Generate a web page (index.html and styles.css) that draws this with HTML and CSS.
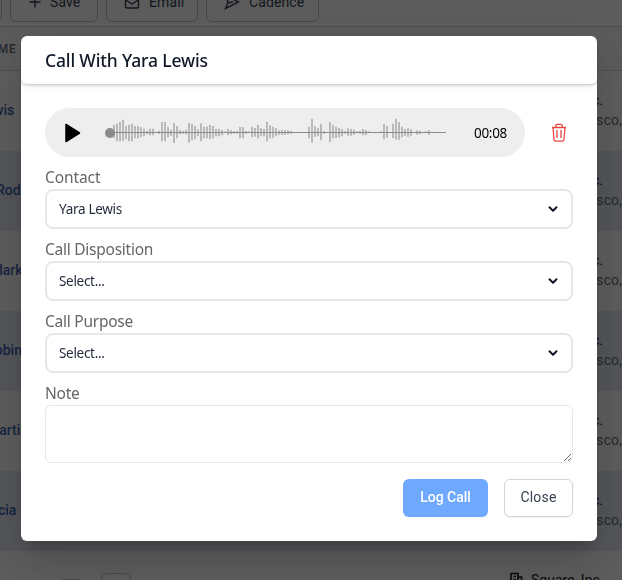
FILE: index.html
```html
<!DOCTYPE html>
<html lang="en">
<head>
<meta charset="utf-8">
<title>Call With Yara Lewis</title>
<link rel="stylesheet" href="styles.css">
</head>
<body>
<div class="page">
  <div class="toolbar">
    <div class="tool tool-cut"></div>
    <div class="tool tool-save"><svg width="14" height="14" viewBox="0 0 14 14"><path d="M7 1.5v11M1.5 7h11"/></svg>Save</div>
    <div class="tool tool-email"><svg width="16" height="16" viewBox="0 0 16 16"><rect x="1.5" y="2" width="13" height="12" rx="1.5"/><path d="M1.5 6L8 10l6.500-4"/></svg>Email</div>
    <div class="tool tool-cadence"><svg width="16" height="16" viewBox="0 0 16 16"><path d="M2.500 2L14.500 8 1.500 14.500 4 8.700zM4 8.700L9 8"/></svg>Cadence</div>
  </div>
  <div class="thead">NAME</div>
  <div class="row"><b class="n1">Lewis</b><div class="org"><span>Inc.</span><small>Francisco,</small></div></div>
  <div class="row alt"><b class="n2">Rodri</b><div class="org"><span>Inc.</span><small>Francisco,</small></div></div>
  <div class="row"><b class="n3">Clark</b><div class="org"><span>Inc.</span><small>Francisco,</small></div></div>
  <div class="row alt"><b class="n4">Robin</b><div class="org"><span>Inc.</span><small>Francisco,</small></div></div>
  <div class="row"><b class="n5">Martin</b><div class="org"><span>Inc.</span><small>Francisco,</small></div></div>
  <div class="row alt"><b class="n6">Garcia</b><div class="org"><span>Inc.</span><small>Francisco,</small></div></div>
  <div class="pager">
    <i class="page-mark"></i><i class="page-box"></i>
    <svg class="building" width="16" height="16" viewBox="0 0 16 16"><path d="M3 15V2.500h7V15M10 6h3.500v9M1.500 15h13M5.500 5.500h2.500M5.500 8.500h2.500"/></svg>
    <span>Square, Inc.</span>
  </div>
</div>
<div class="overlay">
  <div class="modal">
    <header class="modal-head"><span>Call With Yara Lewis</span></header>
    <div class="modal-body">
      <div class="audio-row">
        <div class="player">
          <svg class="play" width="18" height="22" viewBox="0 0 18 22"><path d="M2 2.500v17L15.500 11z"/></svg>
          <svg class="wave" width="342" height="49" viewBox="0 0 342 49"><path id="bars"/><path class="axis" d="M5 24h336v1H5z"/><circle cx="5" cy="25" r="5"/></svg>
          <span class="time">00:08</span>
        </div>
        <svg class="trash" width="16" height="20" viewBox="0 0 16 20"><path d="M1 4.500h14M2 4.500l1 12c.1 1 .8 1.700 1.700 1.700h6.600c.9 0 1.600-.7 1.700-1.700l1-12M4.800 4.200V2.600c0-.8.6-1.300 1.300-1.300h3.800c.7 0 1.300.5 1.300 1.300v1.600M6 7v8M10 7v8"/></svg>
      </div>
      <label class="l1">Contact</label>
      <div class="select"><span class="v1">Yara Lewis</span><svg width="12" height="8" viewBox="0 0 12 8"><path d="M2.500 2.300L6 5.700 9.500 2.300"/></svg></div>
      <label class="l2">Call Disposition</label>
      <div class="select"><span class="v2">Select...</span><svg width="12" height="8" viewBox="0 0 12 8"><path d="M2.500 2.300L6 5.700 9.500 2.300"/></svg></div>
      <label class="l3">Call Purpose</label>
      <div class="select"><span class="v2">Select...</span><svg width="12" height="8" viewBox="0 0 12 8"><path d="M2.500 2.300L6 5.700 9.500 2.300"/></svg></div>
      <label class="l4">Note</label>
      <textarea class="note"></textarea>
      <div class="actions"><button class="primary">Log Call</button><button class="secondary">Close</button></div>
    </div>
  </div>
</div>
<script src="wave.js"></script>
</body>
</html>
```
FILE: wave.js
```js
// Each entry: distance above and below the axis in thirds of a pixel.
const levels = "23,18 26,27 31,27 38,25 18,21 23,27 26,27 19,18 19,18 15,15 11,12 5,6 11,9 11,9 2,1 5,4 31,27 31,27 16,15 8,10 28,32 19,18 8,6 4,4 8,6 28,31 25,24 19,21 9,12 27,27 17,18 17,18 22,21 19,18 10,12 10,12 7,9 3,2 10,9 6,6 4,4 5,4 16,18 16,18 4,4 3,2 16,15 13,13 22,18 13,12 10,12 31,27 21,18 17,16 13,12 6,7 7,8 7,8 6,6 4,4 0,0 0,0 0,0 0,0 0,0 17,18 41,31 18,13 13,12 25,24 4,4 0,0 31,29 21,18 17,18 13,15 10,12 4,4 12,10 10,10 8,7 3,2 4,4 10,9 7,8 3,1 0,0 0,0 0,0 3,2 25,20 19,16 0,0 26,17 41,22 31,22 17,15 10,11 12,13 10,10 0,0 6,7 5,6 0,0 3,1 6,7".split(" ");
document.getElementById("bars").setAttribute("d", levels.map((v, i) => {
  const [up, down] = v.split(",").map(Number);
  return up ? `M${8 + 3 * i} ${24.330 - up / 3}h2v${(up + down) / 3}h-2z` : "";
}).join(""));
```
FILE: styles.css
```css
* { box-sizing: border-box; }
body { margin: 0; width: 622px; height: 580px; overflow: hidden; font-family: Roboto, sans-serif; background: #fff; }
svg { flex: none; fill: none; stroke: currentColor; }
.page { height: 580px; overflow: hidden; }
.toolbar { height: 27px; display: flex; align-items: flex-end; padding-bottom: 4px; border-bottom: 1px solid #d1d5db; overflow: hidden; }
.tool { flex: none; height: 38px; border: 1px solid #c0c4cc; border-radius: 6px; display: flex; align-items: center; gap: 9px; font-size: 14px; font-weight: 400; letter-spacing: .1px; color: #374151; padding: 0 0 2px 17px; }
.tool svg { stroke-width: 1.400; }
.tool-cut { width: 22px; margin-left: -20px; }
.tool-save { width: 88px; margin-left: 8px; gap: 8px; }
.tool-email { width: 92px; margin-left: 8px; }
.tool-cadence { width: 113px; margin-left: 8px; }
.thead { height: 44px; background: #f9fafb; border-bottom: 1px solid #d1d5db; color: #6b7280; font-size: 12px; font-weight: 600; line-height: 44px; letter-spacing: .6px; margin-left: -20px; }
.row { height: 80px; display: flex; justify-content: space-between; }
.alt { background: #e6eaf5; }
.row b { font-size: 14px; line-height: 79px; font-weight: 500; color: #3f63b5; }
.n1 { margin-left: -22px; } .n2 { margin-left: -4px; } .n3 { margin-left: -10px; }
.n4 { margin-left: -14px; } .n5 { margin-left: -13px; } .n6 { margin-left: -24px; }
.org { display: flex; flex-direction: column; align-items: flex-end; padding-top: 19px; font-size: 14px; line-height: 20px; color: #111827; }
.org span { margin-right: 19px; }
.org small { font-size: 14px; color: #6b7280; letter-spacing: .1px; }
.pager { height: 40px; display: flex; align-items: flex-start; padding: 20px 0 0 62px; font-size: 14px; color: #111827; }
.page-mark { width: 18px; height: 5px; margin-top: 8px; border-top: 1px solid #c0c4cc; }
.page-box { width: 30px; height: 26px; margin: 2px 0 0 21px; border: 1px solid #c0c4cc; border-radius: 6px; }
.building { margin-left: 377px; stroke-width: 1.600; }
.pager span { margin-left: 7px; font-weight: 400; line-height: 20px; margin-top: -1px; white-space: nowrap; }
.overlay { position: fixed; inset: 0; background: rgba(0,0,0,.64); padding: 36px 25px 0 21px; }
.modal { height: 505px; border-radius: 6px; background: #fff; box-shadow: 0 11px 15px -7px rgba(0,0,0,.2), 0 24px 38px 3px rgba(0,0,0,.1), 0 9px 46px 8px rgba(0,0,0,.06); font-family: "Noto Sans", sans-serif; }
.modal-head { height: 48px; border-radius: 6px; padding-left: 24px; line-height: 49px; font-size: 17.500px; font-weight: 500; letter-spacing: -.150px; color: #111827; box-shadow: 0 1px 3px rgba(0,0,0,.2), 0 3px 5px rgba(0,0,0,.06); }
.modal-body { padding: 24px 24px 0; display: flex; flex-direction: column; }
.audio-row { display: flex; align-items: center; gap: 26px; height: 49px; }
.player { flex: none; width: 480px; height: 49px; border-radius: 25px; background: #eee; display: flex; align-items: center; padding-left: 19px; }
.play path { fill: #000; stroke: #000; stroke-width: 1.500; stroke-linejoin: round; }
.wave { margin-left: 23px; stroke: none; }
#bars { fill: #b9b9b9; }
.axis, .wave circle { fill: #8b8b8b; }
.time { margin-left: 27px; font-size: 13.500px; letter-spacing: -.3px; color: #000; }
.trash { color: #ef4444; stroke-width: 1.300; margin-top: 1px; }
label { height: 24px; margin-top: 8px; line-height: 24px; font-size: 15.500px; letter-spacing: -.25px; color: #666; white-space: nowrap; }
.l1 { letter-spacing: -.1px; }
.select { height: 40px; border: 2px solid #e5e7eb; border-radius: 8px; padding: 0 12px; display: flex; align-items: center; justify-content: space-between; font-size: 13.500px; letter-spacing: -.3px; color: #1f2937; }
.select svg { stroke: #111827; stroke-width: 2; stroke-linecap: round; stroke-linejoin: round; }
.note { display: block; width: 528px; height: 58px; margin: 0; border: 1px solid #e5e7eb; border-radius: 6px; background: #fff; }
.actions { display: flex; justify-content: flex-end; gap: 16px; margin-top: 16px; }
button { height: 38px; padding: 0 0 2px; border-radius: 6px; font: 500 14px Roboto, sans-serif; }
.primary { width: 85px; border: 0; background: #6ea8ff; color: #fff; box-shadow: 0 1px 2px rgba(0,0,0,.05); }
.secondary { width: 69px; border: 1px solid #d1d5db; background: #fff; color: #374151; font-weight: 400; letter-spacing: .2px; box-shadow: 0 1px 2px rgba(0,0,0,.05); }
```
